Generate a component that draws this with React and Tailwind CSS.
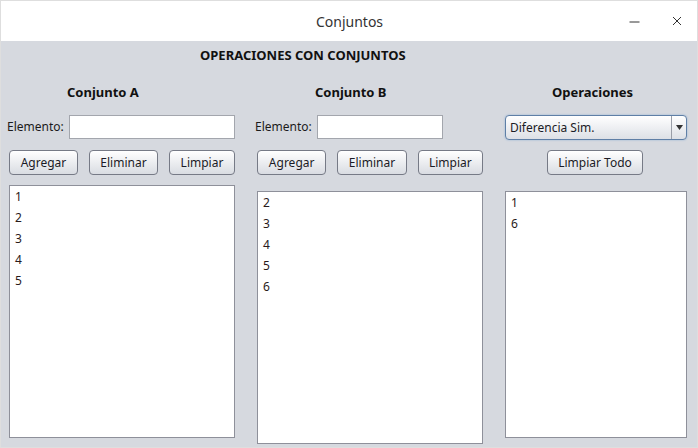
import React from 'react';

const font = { fontFamily: '"Noto Sans", "Open Sans", sans-serif' };

const Button = ({ children, className = '' }) => (
  <button
    type="button"
    className={`h-[25px] rounded-[4px] border border-[#767a86] bg-gradient-to-b from-[#ffffff] to-[#d9dce2] text-[12px] text-[#1b1b26] shadow-[inset_0_1px_0_#ffffff] ${className}`}
  >
    {children}
  </button>
);

const List = ({ items, className = '' }) => (
  <div className={`border border-[#8e909a] bg-white pl-[5px] ${className}`}>
    {items.map((n) => (
      <div key={n} className="h-[21px] leading-[21px] text-[12px] text-[#2a1a1a]">
        {n}
      </div>
    ))}
  </div>
);

const SetColumn = ({ title, inputWidth, btnWidths, listTop, items, listWidth }) => (
  <div className="flex flex-col w-[228px]">
    <div className="h-[45px] flex items-center pl-[60px] text-[13px] font-bold text-[#111]">{title}</div>
    <div className="flex items-center h-[24px] gap-[5px]">
      <span className="text-[12px] text-[#1b1b1b]">Elemento:</span>
      <input className={`h-[24px] ${inputWidth} border border-[#a3a6ad] bg-white outline-none`} />
    </div>
    <div className="flex mt-[11px] ml-[2px] gap-[11px]">
      <Button className={btnWidths[0]}>Agregar</Button>
      <Button className={btnWidths[1]}>Eliminar</Button>
      <Button className={btnWidths[2]}>Limpiar</Button>
    </div>
    <List items={items} className={`${listTop} ml-[2px] ${listWidth} h-[253px]`} />
  </div>
);

export default function App() {
  return (
    <div style={font} className="w-[698px] h-[448px] flex flex-col border border-[#dedede] bg-[#d6d9df] overflow-hidden">
      {/* Title bar */}
      <div className="h-[40px] bg-white flex items-center relative shrink-0">
        <div className="flex-1 text-center text-[14px] text-[#333] pl-[1px]">Conjuntos</div>
        <div className="absolute right-[15px] top-0 h-[40px] flex items-center gap-[32px]">
          <svg width="11" height="11" viewBox="0 0 11 11">
            <line x1="0.5" y1="6" x2="10.5" y2="6" stroke="#333" strokeWidth="1" />
          </svg>
          <svg width="10" height="10" viewBox="0 0 10 10">
            <path d="M1 1 L9 9 M9 1 L1 9" stroke="#333" strokeWidth="1" />
          </svg>
        </div>
      </div>

      <div className="h-[29px] flex items-center pl-[199px] text-[13px] font-bold text-[#111]">
        OPERACIONES CON CONJUNTOS
      </div>

      <div className="flex pl-[6px]">
        <SetColumn
          title="Conjunto A"
          inputWidth="w-[166px]"
          btnWidths={['w-[69px]', 'w-[69px]', 'w-[66px]']}
          listTop="mt-[10px]"
          listWidth="w-[226px]"
          items={[1, 2, 3, 4, 5]}
        />
        <div className="ml-[20px]">
          <SetColumn
            title="Conjunto B"
            inputWidth="w-[126px]"
            btnWidths={['w-[70px]', 'w-[70px]', 'w-[66px]']}
            listTop="mt-[16px]"
            listWidth="w-[226px]"
            items={[2, 3, 4, 5, 6]}
          />
        </div>
        <div className="ml-[22px] flex flex-col w-[182px]">
          <div className="h-[45px] flex items-center pl-[47px] text-[13px] font-bold text-[#111]">Operaciones</div>
          <div className="h-[25px] flex rounded-[4px] border border-[#5f7fa6] bg-gradient-to-b from-[#ffffff] to-[#dde0e6] shadow-[0_0_2px_#8fb0d6]">
            <div className="flex-1 flex items-center pl-[4px] text-[12px] text-[#1b1b26]">Diferencia Sim.</div>
            <div className="w-[15px] border-l border-[#9a9ea8] flex items-center justify-center">
              <svg width="7" height="5" viewBox="0 0 7 5">
                <path d="M0 0 L7 0 L3.5 5 Z" fill="#333" />
              </svg>
            </div>
          </div>
          <div className="flex mt-[10px] ml-[42px]">
            <Button className="w-[96px]">Limpiar Todo</Button>
          </div>
          <List items={[1, 6]} className="mt-[16px] w-[182px] h-[247px]" />
        </div>
      </div>
    </div>
  );
}
